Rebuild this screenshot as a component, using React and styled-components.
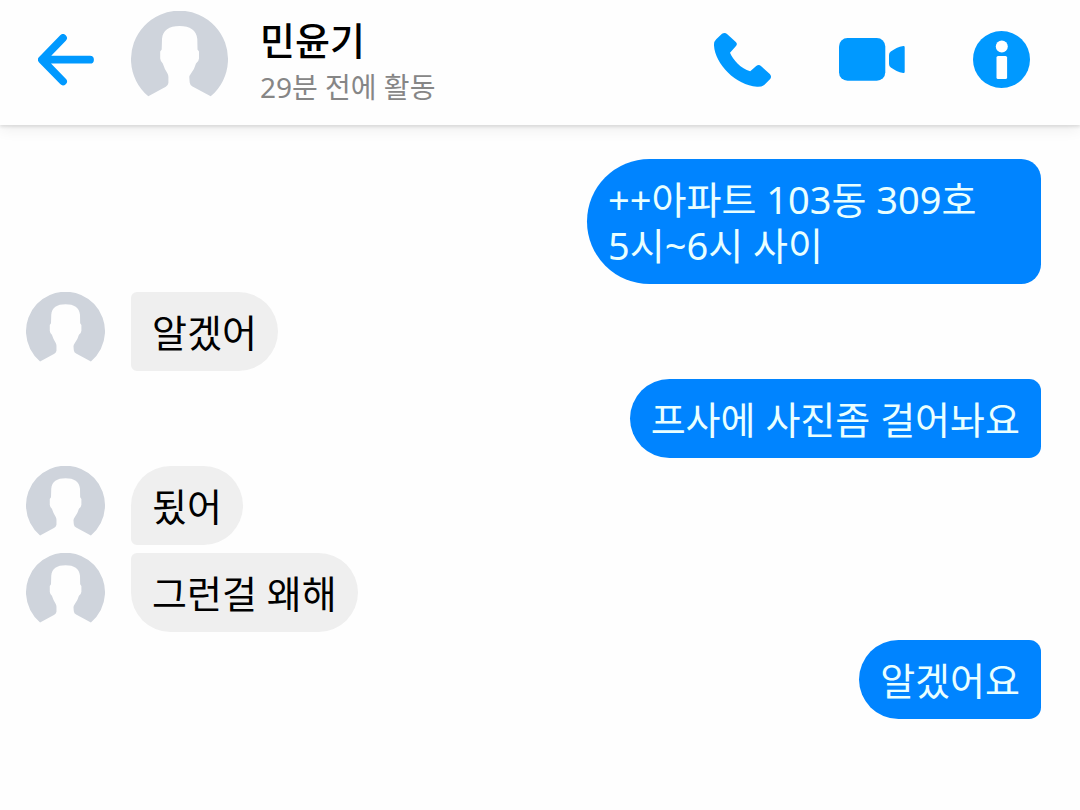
import styled, { createGlobalStyle } from 'styled-components';

const messages = [
  { id: 1, mine: true, wide: true, text: '++아파트 103동 309호\n5시~6시 사이' },
  { id: 2, shape: 'bottom', text: '알겠어' },
  { id: 3, mine: true, text: '프사에 사진좀 걸어놔요' },
  { id: 4, shape: 'top', text: '됬어' },
  { id: 5, shape: 'last', text: '그런걸 왜해' },
  { id: 6, mine: true, text: '알겠어요' },
];

export default function App() {
  return (
    <>
      <GlobalStyle />
      <Header>
        <IconButton type='button' aria-label='뒤로'>
          <BackIcon />
        </IconButton>
        <Contact>
          <Avatar size={97} />
          <ContactInfo>
            <ContactName>민윤기</ContactName>
            <ContactStatus>29분 전에 활동</ContactStatus>
          </ContactInfo>
        </Contact>
        <Actions>
          <IconButton type='button' aria-label='음성 통화'>
            <PhoneIcon />
          </IconButton>
          <IconButton type='button' aria-label='영상 통화'>
            <VideoIcon />
          </IconButton>
          <IconButton type='button' aria-label='정보'>
            <InfoIcon />
          </IconButton>
        </Actions>
      </Header>
      <MessageList>
        {messages.map((message) => (
          <MessageRow key={message.id} $mine={message.mine}>
            {!message.mine && <Avatar size={79} />}
            <Bubble $mine={message.mine} $wide={message.wide} $shape={message.shape}>
              {message.text}
            </Bubble>
          </MessageRow>
        ))}
      </MessageList>
    </>
  );
}

const Avatar = ({ size }) => (
  <AvatarSvg width={size} height={size} viewBox='0 0 97 97' aria-hidden='true'>
    <path d='M17.3 85.3A48.5 48.5 0 1 1 79.7 85.3L61.5 75.6Q59 74.2 58.7 71.5L58.3 66.5Q58.3 64.5 60 62.5Q63.5 58 65 52.5Q67.8 50.5 68 47.5V40.5L66.5 38.5L66.3 28C65.5 19 59 15 48.6 15C38 15 31.8 19 31 28L30.7 38.5L29.2 40.5V47.5Q29.5 50.5 31.8 52.5Q33.5 58 36.5 62.5Q37.6 64.5 37.4 67V72Q37 74.5 34.8 75.7Z' />
  </AvatarSvg>
);

const BackIcon = () => (
  <svg width='56' height='52' viewBox='0 0 56 52' aria-hidden='true'>
    <path d='M25 4L3.9 25.7L25 47.4M4.5 25.7H52' fill='none' stroke='currentColor' strokeWidth='7.8' strokeLinecap='round' strokeLinejoin='round' />
  </svg>
);

const PhoneIcon = () => (
  <svg width='57' height='54' viewBox='0 0 57 54' aria-hidden='true'>
    <path d='M8 .7Q11-.8 13.3 1.2L21.8 9Q23.8 10.8 22 13L16 19.7C19 27 27 35.5 36.2 38.3L42.2 33Q44.8 31 47.2 33.2L55.8 41Q58 43.5 56.2 46L50.5 51.8Q47.5 54 43 53.7C22 52.5 1 31 0 12.5Q-.2 8.5 2.2 6.2Z' fill='currentColor' />
  </svg>
);

const VideoIcon = () => (
  <svg width='66' height='43' viewBox='0 0 66 43' aria-hidden='true'>
    <rect width='46.3' height='42.7' rx='8.5' fill='currentColor' />
    <path d='M50 17Q50 14.7 51.8 13.4C55.5 10.7 59.5 8.8 64.3 7.9Q65.7 7.7 65.7 9.2V33.8Q65.7 35.3 64.2 35C59.5 34.1 55.5 32.2 51.8 29.5Q50 28.2 50 26Z' fill='currentColor' />
  </svg>
);

const InfoIcon = () => (
  <svg width='57' height='57' viewBox='0 0 57 57' aria-hidden='true'>
    <circle cx='28.5' cy='28.5' r='28.5' fill='currentColor' />
    <circle cx='28.8' cy='15.4' r='6' fill='#fff' />
    <rect x='23.5' y='25' width='10.6' height='23' rx='1.6' fill='#fff' />
  </svg>
);

const GlobalStyle = createGlobalStyle`
  * {
    box-sizing: border-box;
  }
  body {
    margin: 0;
    background: #fefefe;
    color: #000;
    font-family: 'Noto Sans', 'Noto Sans CJK KR', sans-serif;
  }
`;

const Header = styled.header`
  display: flex;
  align-items: center;
  padding: 11px 50px 17px 38px;
  background: #fefefe;
  box-shadow: 0 2px 3px rgba(0, 0, 0, 0.1), 0 4px 14px rgba(0, 0, 0, 0.07);
`;

const IconButton = styled.button`
  display: flex;
  padding: 0;
  border: none;
  background: none;
  color: #0099ff;
  cursor: pointer;
`;

const Contact = styled.div`
  display: flex;
  flex: 1;
  align-items: center;
  gap: 32px;
  margin-left: 37px;
`;

const AvatarSvg = styled.svg`
  flex-shrink: 0;
  fill: #cfd4dc;
`;

const ContactInfo = styled.div`
  display: flex;
  flex-direction: column;
`;

const ContactName = styled.h1`
  margin: 0;
  font-size: 38px;
  font-weight: 500;
  line-height: 54px;
`;

const ContactStatus = styled.div`
  color: #868686;
  font-size: 28px;
  line-height: 40px;
`;

const Actions = styled.div`
  display: flex;
  align-items: center;
  gap: 68px;
`;

const MessageList = styled.main`
  display: flex;
  flex-direction: column;
  gap: 8px;
  padding: 34px 39px 34px 26px;
`;

const MessageRow = styled.div`
  display: flex;
  align-items: flex-start;
  gap: 26px;
  justify-content: ${({ $mine }) => ($mine ? 'flex-end' : 'flex-start')};
`;

const radius = ({ $mine, $wide, $shape }) => {
  if ($wide) return '63px 20px 20px 63px';
  if ($mine) return '40px 12px 12px 40px';
  if ($shape === 'top') return '40px 40px 40px 6px';
  if ($shape === 'last') return '6px 40px 40px 40px';
  return '6px 40px 40px 6px';
};

const Bubble = styled.div`
  width: ${({ $wide }) => ($wide ? '454px' : 'auto')};
  max-width: 70%;
  padding: 17px 21px 16px;
  border-radius: ${radius};
  background: ${({ $mine }) => ($mine ? '#0084ff' : '#efefef')};
  color: ${({ $mine }) => ($mine ? '#e9ffff' : '#000')};
  font-size: 38px;
  line-height: 46px;
  white-space: pre-wrap;
`;
